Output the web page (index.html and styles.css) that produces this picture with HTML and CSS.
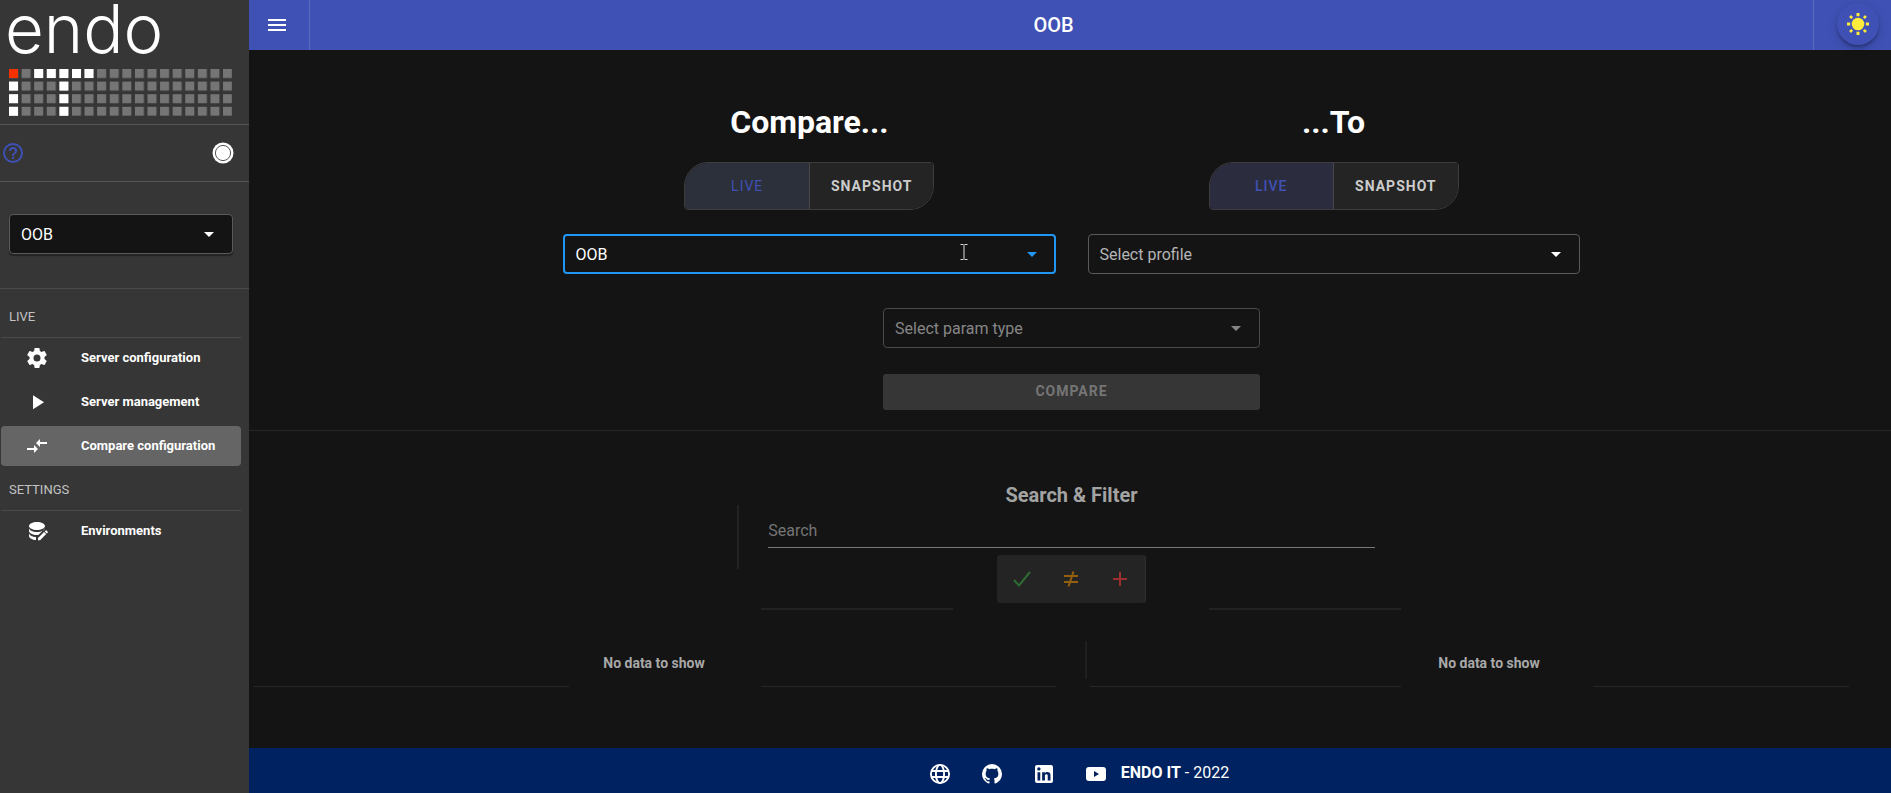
FILE: index.html
```html
<!DOCTYPE html>
<html lang="en">
<head>
<meta charset="utf-8">
<title>endo - Compare configuration</title>
<link rel="stylesheet" href="styles.css">
</head>
<body>
<div class="app">
  <aside class="sidebar">
    <div class="brand">
      <svg class="brand-name" viewBox="0 0 190 60" role="img" aria-label="endo"><text class="brand-text" x="-4" y="53">endo</text></svg>
      <svg class="brand-dots" viewBox="0 0 223 47" aria-hidden="true">
        <defs>
          <pattern id="dots" width="12.59" height="12.6" patternUnits="userSpaceOnUse"><rect width="9" height="9" fill="#757575"/></pattern>
        </defs>
        <rect width="223" height="47" fill="url(#dots)"/>
        <rect width="9" height="9" fill="#f53100"/>
        <g fill="#fff">
          <rect x="25.2" width="9" height="9"/><rect x="37.8" width="9" height="9"/><rect x="50.4" width="9" height="9"/><rect x="63" width="9" height="9"/><rect x="75.5" width="9" height="9"/>
          <rect y="12.6" width="9" height="9"/><rect y="25.2" width="9" height="9"/><rect y="37.8" width="9" height="9"/>
          <rect x="50.4" y="12.6" width="9" height="9"/><rect x="50.4" y="25.2" width="9" height="9"/><rect x="50.4" y="37.8" width="9" height="9"/>
        </g>
      </svg>
    </div>
    <div class="tools">
      <button class="icon-btn help" aria-label="Help"><svg class="icon" viewBox="0 0 24 24"><path d="M11,18H13V16H11V18M12,2A10,10 0 0,0 2,12A10,10 0 0,0 12,22A10,10 0 0,0 22,12A10,10 0 0,0 12,2M12,20C7.59,20 4,16.41 4,12C4,7.59 7.59,4 12,4C16.41,4 20,7.59 20,12C20,16.41 16.41,20 12,20M12,6A4,4 0 0,0 8,10H10A2,2 0 0,1 12,8A2,2 0 0,1 14,10C14,12 11,11.75 11,15H13C13,12.75 16,12.5 16,10A4,4 0 0,0 12,6Z"/></svg></button>
      <button class="icon-btn" aria-label="Pin menu"><svg class="icon" viewBox="0 0 24 24"><circle cx="12" cy="12" r="10.5"/><circle cx="12" cy="12" r="7.6" fill="none" stroke="#555" stroke-width="1"/></svg></button>
    </div>
    <div class="env">
      <div class="field field-raised">
        <select class="select" aria-label="Environment"><option>OOB</option></select>
        <svg class="arrow" viewBox="0 0 10 5"><path d="M0,0H10L5,5Z"/></svg>
      </div>
    </div>
    <nav class="menu">
      <h2 class="menu-title">LIVE</h2>
      <a class="menu-item" href="#server"><svg class="icon" viewBox="0 0 24 24"><path d="M12,15.5A3.5,3.5 0 0,1 8.5,12A3.5,3.5 0 0,1 12,8.5A3.5,3.5 0 0,1 15.5,12A3.5,3.5 0 0,1 12,15.5M19.43,12.97C19.47,12.65 19.5,12.33 19.5,12C19.5,11.67 19.47,11.34 19.43,11L21.54,9.37C21.73,9.22 21.78,8.95 21.66,8.73L19.66,5.27C19.54,5.05 19.27,4.96 19.05,5.05L16.56,6.05C16.04,5.66 15.5,5.32 14.87,5.07L14.5,2.42C14.46,2.18 14.25,2 14,2H10C9.75,2 9.54,2.18 9.5,2.42L9.13,5.07C8.5,5.32 7.96,5.66 7.44,6.05L4.95,5.05C4.73,4.96 4.46,5.05 4.34,5.27L2.34,8.73C2.21,8.95 2.27,9.22 2.46,9.37L4.57,11C4.53,11.34 4.5,11.67 4.5,12C4.5,12.33 4.53,12.65 4.57,12.97L2.46,14.63C2.27,14.78 2.21,15.05 2.34,15.27L4.34,18.73C4.46,18.95 4.73,19.03 4.95,18.95L7.44,17.94C7.96,18.34 8.5,18.68 9.13,18.93L9.5,21.58C9.54,21.82 9.75,22 10,22H14C14.25,22 14.46,21.82 14.5,21.58L14.87,18.93C15.5,18.67 16.04,18.34 16.56,17.94L19.05,18.95C19.27,19.03 19.54,18.95 19.66,18.73L21.66,15.27C21.78,15.05 21.73,14.78 21.54,14.63L19.43,12.97Z"/></svg>Server configuration</a>
      <a class="menu-item" href="#management"><svg class="icon" viewBox="0 0 24 24"><path d="M8,5.14V19.14L19,12.14L8,5.14Z"/></svg>Server management</a>
      <a class="menu-item active" href="#compare" aria-current="page"><svg class="icon" viewBox="0 0 24 24"><path d="M9.01 14H2v2h7.01v3L13 15l-3.99-4v3zm5.98-1v-3H22V8h-7.01V5L11 9l3.99 4z"/></svg>Compare configuration</a>
      <h2 class="menu-title">SETTINGS</h2>
      <a class="menu-item" href="#environments"><svg class="icon" viewBox="0 0 24 24"><path d="M12,3C7.58,3 4,4.79 4,7S7.58,11 12,11S20,9.21 20,7S16.42,3 12,3M4,9V12C4,14.21 7.58,16 12,16C12.5,16 12.9,16 13.4,15.9L18.6,10.8C19.1,10.3 19.6,10.2 20,10V9C20,11.21 16.42,13 12,13S4,11.21 4,9M4,14V17C4,19.21 7.58,21 11,21V18.3L11.3,18C7.3,17.9 4,16.2 4,14M21.1,11.3C21,11.3 20.8,11.4 20.7,11.5L19.7,12.5L21.8,14.6L22.8,13.6C23,13.4 23,13 22.8,12.8L21.5,11.5C21.4,11.4 21.3,11.3 21.1,11.3M19.1,13.1L13,19.1V21.2H15.1L21.2,15.1Z"/></svg>Environments</a>
    </nav>
  </aside>

  <div class="page">
    <header class="topbar">
      <button class="topbar-menu" aria-label="Menu"><svg class="icon" viewBox="0 0 24 24"><path d="M3,6H21V8H3V6M3,11H21V13H3V11M3,16H21V18H3V16Z"/></svg></button>
      <h1 class="topbar-title">OOB</h1>
      <div class="topbar-end">
        <button class="theme" aria-label="Toggle theme"><svg class="icon" viewBox="0 0 24 24"><circle cx="12" cy="12" r="6.3"/><g stroke="#ffeb3b" stroke-width="3"><path d="M12,1V4.2M12,19.8V23M1,12H4.2M19.8,12H23"/><path d="M4,4L6.2,6.2M17.8,17.8L20,20M4,20L6.2,17.8M17.8,6.2L20,4" stroke-width="2.6"/></g></svg></button>
      </div>
    </header>

    <main class="main">
      <section class="compare">
        <div class="sides">
          <div class="side">
            <h2 class="side-title">Compare...</h2>
            <div class="toggle toggle-hover"><button class="toggle-btn on" aria-pressed="true">LIVE</button><button class="toggle-btn" aria-pressed="false">SNAPSHOT</button></div>
            <div class="field field-focus">
              <select class="select" aria-label="Source profile"><option>OOB</option></select>
              <svg class="arrow" viewBox="0 0 10 5"><path d="M0,0H10L5,5Z"/></svg>
              <svg class="pointer" viewBox="0 0 8 16" aria-hidden="true"><path d="M0.5,0.5H3.5M4.5,0.5H7.5M4,1V15M0.5,15.5H3.5M4.5,15.5H7.5"/></svg>
            </div>
          </div>
          <div class="side">
            <h2 class="side-title">...To</h2>
            <div class="toggle"><button class="toggle-btn on" aria-pressed="true">LIVE</button><button class="toggle-btn" aria-pressed="false">SNAPSHOT</button></div>
            <div class="field">
              <select class="select placeholder" aria-label="Target profile"><option>Select profile</option></select>
              <svg class="arrow" viewBox="0 0 10 5"><path d="M0,0H10L5,5Z"/></svg>
            </div>
          </div>
        </div>
        <div class="params">
          <div class="field field-disabled">
            <select class="select" aria-label="Param type" disabled><option>Select param type</option></select>
            <svg class="arrow" viewBox="0 0 10 5"><path d="M0,0H10L5,5Z"/></svg>
          </div>
          <button class="submit" disabled>COMPARE</button>
        </div>
      </section>

      <section class="results">
        <div class="filter">
          <span class="filter-rule"></span>
          <div class="filter-body">
            <h3 class="filter-title">Search &amp; Filter</h3>
            <input class="search" type="text" placeholder="Search" aria-label="Search">
            <div class="filter-row">
              <div class="filter-group">
                <button class="filter-btn same" aria-label="Equal"><svg class="icon" viewBox="0 0 24 24"><path d="M4,13L9,18.5L20,5"/></svg></button>
                <button class="filter-btn diff" aria-label="Different"><svg class="icon" viewBox="0 0 24 24"><path d="M5,9H19M5,15H19M9.5,19.5L14.5,4.5"/></svg></button>
                <button class="filter-btn added" aria-label="Added"><svg class="icon" viewBox="0 0 24 24"><path d="M12,5V19M5,12H19"/></svg></button>
              </div>
            </div>
          </div>
          <span></span>
        </div>
        <div class="rules rules-top"><span></span><hr class="rule thick"><span></span><hr class="rule thick"><span></span></div>
        <div class="panels">
          <p class="panel">No data to show</p>
          <span class="panel-rule"></span>
          <p class="panel">No data to show</p>
        </div>
        <div class="rules rules-bottom"><span></span><hr class="rule"><span></span><hr class="rule"><span></span><hr class="rule"><span></span><hr class="rule"><span></span></div>
      </section>
    </main>

    <footer class="footer">
      <a class="social" href="#web" aria-label="Website"><svg class="icon" viewBox="0 0 24 24"><g fill="none" stroke="#fff" stroke-width="1.9"><circle cx="12" cy="12" r="9.1"/><ellipse cx="12" cy="12" rx="4.1" ry="9.1"/><path d="M3.4,9H20.6M3.4,15H20.6"/></g></svg></a>
      <a class="social" href="#github" aria-label="GitHub"><svg class="icon" viewBox="0 0 24 24"><path d="M12,2A10,10 0 0,0 2,12C2,16.42 4.87,20.17 8.84,21.5C9.34,21.58 9.5,21.27 9.5,21C9.5,20.77 9.5,20.14 9.5,19.31C6.73,19.91 6.14,17.97 6.14,17.97C5.68,16.81 5.03,16.5 5.03,16.5C4.12,15.88 5.1,15.9 5.1,15.9C6.1,15.97 6.63,16.93 6.63,16.93C7.5,18.45 8.97,18 9.54,17.76C9.63,17.11 9.89,16.67 10.17,16.42C7.95,16.17 5.62,15.31 5.62,11.5C5.62,10.39 6,9.5 6.65,8.79C6.55,8.54 6.2,7.5 6.75,6.15C6.75,6.15 7.59,5.88 9.5,7.17C10.29,6.95 11.15,6.84 12,6.84C12.85,6.84 13.71,6.95 14.5,7.17C16.41,5.88 17.25,6.15 17.25,6.15C17.8,7.5 17.45,8.54 17.35,8.79C18,9.5 18.38,10.39 18.38,11.5C18.38,15.32 16.04,16.16 13.81,16.41C14.17,16.72 14.5,17.33 14.5,18.26C14.5,19.6 14.5,20.68 14.5,21C14.5,21.27 14.66,21.59 15.17,21.5C19.14,20.16 22,16.42 22,12A10,10 0 0,0 12,2Z"/></svg></a>
      <a class="social" href="#linkedin" aria-label="LinkedIn"><svg class="icon" viewBox="0 0 24 24"><path d="M19 3A2 2 0 0 1 21 5V19A2 2 0 0 1 19 21H5A2 2 0 0 1 3 19V5A2 2 0 0 1 5 3H19M18.5 18.5V13.2A3.26 3.26 0 0 0 15.24 9.94C14.39 9.94 13.4 10.46 12.92 11.24V10.13H10.13V18.5H12.92V13.57C12.92 12.8 13.54 12.17 14.31 12.17A1.4 1.4 0 0 1 15.71 13.57V18.5H18.5M6.88 8.56A1.68 1.68 0 0 0 8.56 6.88C8.56 5.95 7.81 5.19 6.88 5.19A1.69 1.69 0 0 0 5.19 6.88C5.19 7.81 5.95 8.56 6.88 8.56M8.27 18.5V10.13H5.5V18.5H8.27Z"/></svg></a>
      <a class="social" href="#youtube" aria-label="YouTube"><svg class="icon" viewBox="0 0 24 24"><path fill-rule="evenodd" d="M5,5H19Q22,5 22,8V16Q22,19 19,19H5Q2,19 2,16V8Q2,5 5,5M10,9V15L15,12Z"/></svg></a>
      <p class="footer-text"><strong>ENDO IT</strong> - 2022</p>
    </footer>
  </div>
</div>
</body>
</html>
```

FILE: styles.css
```css
* { box-sizing: border-box; }
body { margin: 0; background: #141414; color: #fff; font-family: Roboto, "Liberation Sans", sans-serif; font-size: 16px; line-height: 24px; }
h1, h2, h3, p { margin: 0; }
button { font: inherit; color: inherit; border: 0; padding: 0; background: none; }
.icon { display: block; width: 24px; height: 24px; fill: currentColor; flex: none; }
.app { display: flex; min-height: 100vh; }

.sidebar { width: 249px; flex: none; background: #363636; }
.brand { padding: 0 8px 8px 9px; height: 125px; border-bottom: 1px solid #555; }
.brand-name { display: block; width: 190px; height: 60px; overflow: visible; }
.brand-text { font-family: Inter, "DejaVu Sans", sans-serif; font-weight: 300; font-size: 67px; fill: #fff; }
.brand-dots { display: block; width: 223px; height: 47px; margin-top: 9px; }
.tools { display: flex; justify-content: space-between; align-items: center; height: 57px; padding: 0 14px 0 1px; border-bottom: 1px solid #555; }
.help { color: #3f51b5; }
.env { padding: 32px 16px 34px 9px; border-bottom: 1px solid #4a4a4a; }
.menu { padding: 5px 8px 0 1px; }
.menu-title { height: 44px; padding: 0 8px; border-bottom: 1px solid #4a4a4a; font-size: 13px; font-weight: 400; line-height: 46px; color: #c3c3c3; }
.menu-item { display: flex; align-items: center; gap: 32px; height: 40px; margin-bottom: 4px; padding: 0 24px; border-radius: 4px; font-size: 13px; font-weight: 700; color: #fff; text-decoration: none; }
.menu-item.active { background: #656565; margin-bottom: 1px; }

.field { position: relative; width: 100%; }
.select { display: block; width: 100%; height: 40px; padding: 1px 32px 0 11px; border: 1px solid #5a5a5a; border-radius: 4px; background: #141414; color: #fff; font: inherit; appearance: none; opacity: 1; }
.arrow { position: absolute; right: 19px; top: 18px; width: 10px; height: 5px; fill: #fff; pointer-events: none; }
.placeholder { color: #b5b5b5; }
.field-raised .select { box-shadow: 0 2px 1px #242424; }
.field-focus .select { border: 2px solid #2196f3; padding-left: 10px; }
.field-focus .arrow { fill: #2196f3; }
.field-disabled .select { color: #868686; border-color: #4a4a4a; }
.field-disabled .arrow { fill: #868686; }
.pointer { position: absolute; right: 88px; top: 10px; width: 8px; height: 16px; fill: none; stroke: #ddd; pointer-events: none; }

.page { flex: 1; display: flex; flex-direction: column; min-width: 0; }
.topbar { display: flex; height: 50px; background: #3f51b5; }
.topbar-menu { display: flex; align-items: center; padding: 0 20px 0 16px; border-right: 1px solid #5c6bc0; }
.topbar-title { flex: 1; align-self: center; padding-right: 16px; font-size: 20px; font-weight: 500; text-align: center; }
.topbar-end { display: flex; align-items: center; width: 78px; padding: 0 12px 2px 23px; border-left: 1px solid #5c6bc0; }
.theme { display: grid; place-items: center; width: 42px; height: 42px; border-radius: 50%; color: #ffeb3b; background: #3f51b5; box-shadow: 0 3px 3px -1px rgba(0,0,0,.25), 0 3px 10px rgba(0,0,0,.2); }

.main { flex: 1; }
.compare { display: flex; flex-direction: column; align-items: center; gap: 34px; padding: 56px 0 20px 3px; border-bottom: 1px solid #262626; }
.sides { display: flex; gap: 32px; width: 62%; }
.side { flex: 1; display: flex; flex-direction: column; align-items: center; gap: 24px; }
.side-title { font-size: 32px; font-weight: 700; line-height: 32px; }
.toggle { display: flex; width: 250px; height: 48px; border: 1px solid #3d3d3d; border-radius: 24px 4px; overflow: hidden; }
.toggle-btn { flex: 1; background: #242424; color: #ccc; font-size: 14px; font-weight: 700; letter-spacing: 1px; }
.toggle-btn.on { background: #2b2d3f; color: #3f51b5; border-right: 1px solid #484848; font-weight: 500; }
.toggle-hover .toggle-btn.on { background: #2b303b; font-weight: 400; }
.params { display: flex; flex-direction: column; gap: 26px; width: 23%; }
.submit { height: 36px; padding-bottom: 2px; border-radius: 3px; background: #363636; color: #757575; font-size: 14px; font-weight: 700; letter-spacing: 1px; }

.results { padding-top: 52px; }
.filter { display: grid; grid-template-columns: 2px 37% 2px; gap: 29px; justify-content: center; padding-left: 3px; }
.filter-rule { height: 64px; margin-top: 22px; background: #222; }
.filter-title { font-size: 20px; font-weight: 700; text-align: center; color: #a3a3a3; }
.search { display: block; width: 100%; height: 36px; margin-top: 5px; padding: 1px 0 0; border: 0; border-bottom: 1px solid #777; background: none; color: #fff; font: inherit; outline: 0; }
.search::placeholder { color: #757575; opacity: 1; }
.filter-row { display: flex; justify-content: center; margin-top: 7px; }
.filter-group { display: flex; width: 149px; height: 48px; border-radius: 3px; background: #242424; border-right: 1px solid #2e2e2e; }
.filter-btn { flex: 1; display: grid; place-items: center; }
.filter-btn path { fill: none; stroke: currentColor; stroke-width: 2; }
.same { color: #2e6b34; }
.diff { color: #94600f; }
.added { color: #99302d; }
.rules { display: grid; }
.rules-top { grid-template-columns: 512fr 192fr 256fr 192fr 490fr; margin-top: 5px; }
.rules-bottom { grid-template-columns: 4fr 316fr 192fr 295fr 34fr 311fr 192fr 256fr 42fr; margin-top: 4px; }
.rule { width: 100%; height: 1px; margin: 0; border: 0; background: #262626; }
.thick { height: 2px; background: #222; }
.panels { display: grid; grid-template-columns: 810fr 26fr 2px 804fr; align-items: start; margin-top: 31px; }
.panel { font-size: 14px; font-weight: 700; text-align: center; color: #a8a8a8; line-height: 38px; padding-top: 3px; }
.panel-rule { grid-column: 3; height: 38px; background: #1f1f1f; }
.panel-rule + .panel { grid-column: 4; }

.footer { display: flex; align-items: center; justify-content: center; gap: 28px; height: 45px; padding-left: 17px; background: #002260; }
.social { margin-top: 7px; color: #fff; }
.footer-text { margin: 4px 0 0 -15px; }
```
